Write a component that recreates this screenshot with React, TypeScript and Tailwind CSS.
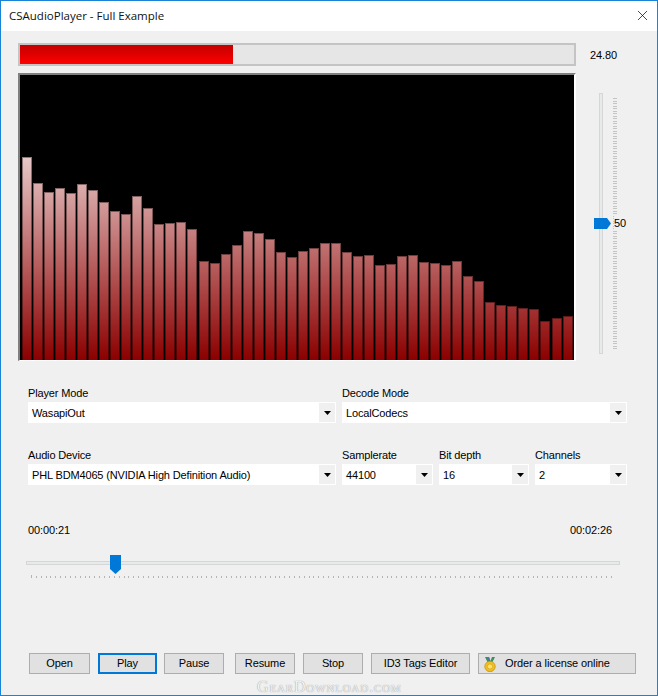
import { X } from "lucide-react";

// y position of the top of every spectrum bar, the chart floor sits at 360
const barTops = [
  157, 183, 192, 188, 193, 184, 190, 202, 211, 214, 196, 208, 224, 223, 222, 229, 261, 263, 254, 245,
  231, 233, 239, 252, 257, 251, 248, 243, 243, 252, 256, 255, 265, 264, 256, 255, 262, 263, 265, 261,
  276, 281, 302, 305, 306, 308, 309, 321, 318, 316,
];

const volumeTicks = Array.from({ length: 101 }, (_, i) => 0.5 + i * 2.5);
const seekTicks = Array.from({ length: 120 }, (_, i) => 0.5 + i * 4.87);

function Combo({ label, value, className }: { label: string; value: string; className?: string }) {
  return (
    <div className={className}>
      <div className="h-[14px] text-[11px] leading-[10px] tracking-[-0.15px] text-black">{label}</div>
      <div className="flex h-[21px] items-center border border-white bg-white">
        <span className="flex-1 truncate pl-[3px] pt-[1px] text-[11px] tracking-[-0.15px] text-black">{value}</span>
        <span className="flex h-[19px] w-[16px] items-center justify-center bg-[#f0f0f0]">
          <svg width="7" height="4" viewBox="0 0 7 4">
            <path d="M0 0h7L3.5 4z" fill="#000" />
          </svg>
        </span>
      </div>
    </div>
  );
}

function Btn({ children, className }: { children: React.ReactNode; className: string }) {
  return (
    <button className={`flex h-[21px] items-center justify-center border border-[#adadad] bg-[#e1e1e1] text-[11px] tracking-[-0.1px] text-black ${className}`}>
      {children}
    </button>
  );
}

function Medal() {
  return (
    <svg width="12" height="15" viewBox="0 0 12 15" className="absolute left-[5px] top-[3px]">
      <path d="M1 0h4l1.5 4L8 0h3L8 6H4z" fill="#3f8f5a" />
      <path d="M2.5 0H5l1 3-1 1z" fill="#5b6fb0" />
      <circle cx="6" cy="9.5" r="5.2" fill="#f0c020" stroke="#c8901a" strokeWidth="0.8" />
      <circle cx="6" cy="9.5" r="2.6" fill="#ffe26a" stroke="#d6a020" strokeWidth="0.7" />
    </svg>
  );
}

export default function App() {
  return (
    <div className="relative flex h-[696px] w-[658px] flex-col overflow-hidden border border-[#1883d7] bg-[#f0f0f0] font-['Liberation_Sans',sans-serif]">
      <div className="flex h-[30px] items-center justify-between bg-white pl-[8px] pr-[6px]">
        <span className="font-['Open_Sans',sans-serif] text-[11.5px] text-[#111]">CSAudioPlayer - Full Example</span>
        <X size={17} strokeWidth={1} className="mb-[2px] text-black" />
      </div>

      <div className="flex flex-1 flex-col pl-[17px] pt-[12px]">
        <div className="flex">
          <div className="w-[558px]">
            <div className="h-[23px] border-2 border-[#c4c4c4] bg-[#e6e6e6]">
              <div className="h-full w-[213px] bg-gradient-to-b from-[#c40000] to-[#ff0000]" />
            </div>
            <div className="mt-[7px] flex h-[288px] w-[558px] items-end justify-between border-x-2 border-b border-t-2 border-b-white border-l-[#7f7f7f] border-r-white border-t-[#7f7f7f] bg-black pl-[2px] pr-[1px]">
              {barTops.map((top, i) => (
                <div
                  key={i}
                  className="w-[10px] border-x border-t border-black/40 bg-[linear-gradient(to_bottom,#e8c8c8,#8b0000)] bg-[length:100%_203px] bg-bottom"
                  style={{ height: 360 - top }}
                />
              ))}
            </div>
          </div>

          <div className="relative ml-[14px] flex-1">
            <div className="text-[11px] leading-[24px] tracking-[-0.1px] text-black">24.80</div>
            <div className="absolute left-[9px] top-[50px] h-[261px] w-[4px] border border-[#d6d6d6] bg-[#e7eaea]" />
            <svg width="4" height="251" className="absolute left-[23px] top-[55px]" shapeRendering="crispEdges">
              {volumeTicks.map((y) => (
                <line key={y} x1="0" x2="4" y1={y} y2={y} stroke="#c4c4c4" />
              ))}
            </svg>
            <svg width="17" height="11" className="absolute left-[4px] top-[175px]">
              <path d="M0 0h13l4 5.5-4 5.5H0z" fill="#0078d7" />
            </svg>
            <div className="absolute left-[24px] top-[172px] bg-[#f0f0f0] text-[11px] leading-[16px] text-black">50</div>
          </div>
        </div>

        <div className="ml-[10px] mt-[27px] grid w-[599px] grid-cols-[308px_91px_90px_92px] gap-x-[6px] gap-y-[27px]">
          <Combo label="Player Mode" value="WasapiOut" />
          <Combo label="Decode Mode" value="LocalCodecs" className="col-span-3" />
          <Combo label="Audio Device" value="PHL BDM4065 (NVIDIA High Definition Audio)" />
          <Combo label="Samplerate" value="44100" />
          <Combo label="Bit depth" value="16" />
          <Combo label="Channels" value="2" />
        </div>

        <div className="ml-[10px] mt-[38px] flex w-[584px] justify-between text-[11px] leading-[14px] tracking-[-0.1px] text-black">
          <span>00:00:21</span>
          <span>00:02:26</span>
        </div>

        <div className="relative ml-[8px] mt-[24px] h-[4px] w-[594px] border border-[#d6d6d6] bg-[#e7eaea]">
          <svg width="11" height="19" className="absolute left-[83px] top-[-7px]">
            <path d="M0 0h11v14l-5.5 5L0 14z" fill="#0078d7" />
          </svg>
        </div>
        <svg width="590" height="4" className="ml-[13px] mt-[10px]" shapeRendering="crispEdges">
          {seekTicks.map((x, i) => (
            <line key={x} x1={x} x2={x} y1={i === 0 ? 0 : 1} y2="3" stroke="#b4b4b4" />
          ))}
        </svg>

        <div className="ml-[11px] mt-[74px] flex">
          <Btn className="w-[61px]">Open</Btn>
          <button className="ml-[8px] flex h-[21px] w-[59px] items-center justify-center border-2 border-[#0078d7] bg-[#e1e1e1] text-[11px] tracking-[-0.1px] text-black">
            Play
          </button>
          <Btn className="ml-[7px] w-[60px]">Pause</Btn>
          <Btn className="ml-[11px] w-[60px]">Resume</Btn>
          <Btn className="ml-[8px] w-[60px]">Stop</Btn>
          <Btn className="ml-[8px] w-[99px]">ID3 Tags Editor</Btn>
          <Btn className="relative ml-[8px] w-[158px] !justify-start pl-[26px]">
            <Medal />
            Order a license online
          </Btn>
        </div>
      </div>

      <div className="absolute bottom-[-1px] left-[256px] font-['Liberation_Serif',serif] text-[16px] leading-[18px] tracking-[0.85px] text-[#f4f4f4] [font-variant:small-caps] [text-shadow:0_0_1px_#777]">
        GearDownload.com
      </div>
    </div>
  );
}
